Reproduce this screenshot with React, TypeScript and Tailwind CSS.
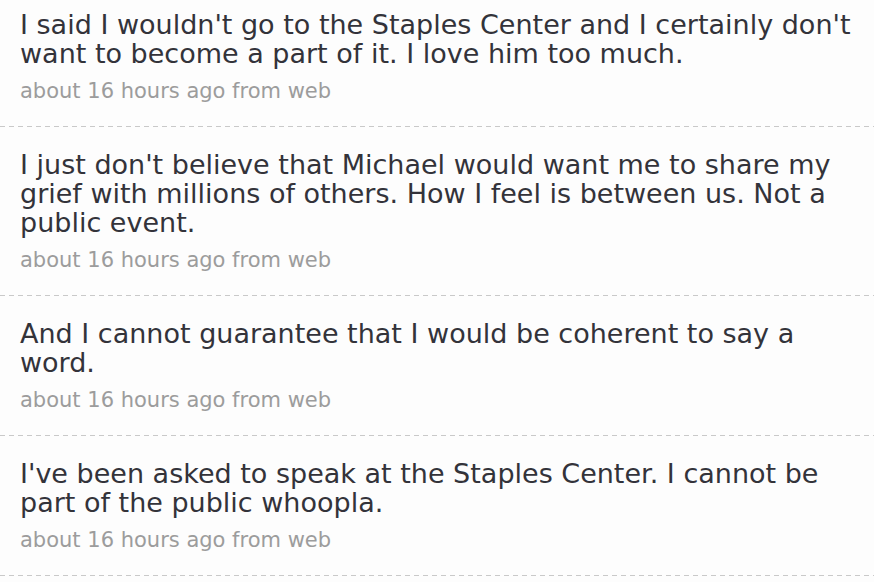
import React from "react";

type Tweet = {
    text: string;
    meta: string;
};

const tweets: Tweet[] = [
    {
        text: "I said I wouldn't go to the Staples Center and I certainly don't want to become a part of it. I love him too much.",
        meta: "about 16 hours ago from web",
    },
    {
        text: "I just don't believe that Michael would want me to share my grief with millions of others. How I feel is between us. Not a public event.",
        meta: "about 16 hours ago from web",
    },
    {
        text: "And I cannot guarantee that I would be coherent to say a word.",
        meta: "about 16 hours ago from web",
    },
    {
        text: "I've been asked to speak at the Staples Center. I cannot be part of the public whoopla.",
        meta: "about 16 hours ago from web",
    },
];

function Divider() {
    return (
        <div className="h-px w-full bg-[repeating-linear-gradient(to_right,#c9c9c9_0_5px,transparent_5px_9px)]"></div>
    );
}

function TweetRow({ text, meta, first }: Tweet & { first: boolean }) {
    return (
        <li className={first ? "pt-[10px] pb-[23px]" : "pt-[23px] pb-[23px]"}>
            <div className="pl-[20px] pr-[8px]">
                <p className="text-[27px]/[29px] text-[#33333a]">{text}</p>
                <p className="mt-[11px] text-[21px]/[24px] text-[#9c9c9c]">{meta}</p>
            </div>
        </li>
    );
}

export default function App() {
    return (
        <main
            className="w-[874px] h-[582px] overflow-hidden bg-[#fdfdfd]"
            style={{ fontFamily: '"DejaVu Sans", Verdana, sans-serif' }}
        >
            <ul className="flex flex-col">
                {tweets.map((t, i) => (
                    <React.Fragment key={i}>
                        <TweetRow {...t} first={i === 0} />
                        <Divider />
                    </React.Fragment>
                ))}
            </ul>
        </main>
    );
}
